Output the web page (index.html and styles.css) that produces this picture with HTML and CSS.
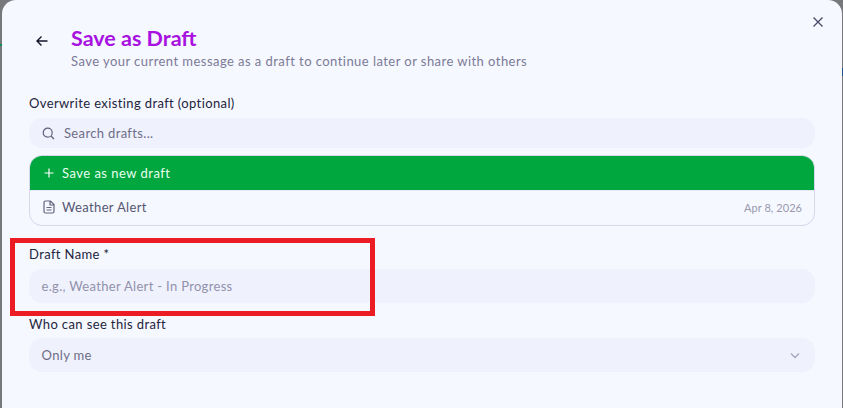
FILE: index.html
```html
<!DOCTYPE html>
<html lang="en">
<head>
<meta charset="utf-8">
<title>Save as Draft</title>
<link rel="stylesheet" href="styles.css">
</head>
<body>
<div class="modal">
  <button class="close" aria-label="Close">
    <svg width="12" height="12" viewBox="0 0 12 12"><path d="M1.500 1.500l9 9M10.500 1.500l-9 9"/></svg>
  </button>
  <header class="head">
    <svg class="back" width="14" height="14" viewBox="0 0 14 14"><path d="M12.500 7H2M6.500 2.500L2 7l4.500 4.500"/></svg>
    <div class="titles">
      <h1>Save as Draft</h1>
      <p>Save your current message as a draft to continue later or share with others</p>
    </div>
  </header>
  <label class="label first">Overwrite existing draft (optional)</label>
  <div class="field search">
    <svg width="13" height="13" viewBox="0 0 13 13"><circle cx="5.700" cy="5.700" r="4.500"/><path d="M9 9l3 3"/></svg>
    <span>Search drafts...</span>
  </div>
  <div class="list">
    <div class="row new">
      <svg width="12" height="12" viewBox="0 0 12 12"><path d="M6 1.500v9M1.500 6h9"/></svg>
      <span>Save as new draft</span>
    </div>
    <div class="row item">
      <svg width="12" height="14" viewBox="0 0 12 14"><path d="M3 1h4.500L11 4.500V11.500a1.500 1.500 0 0 1-1.500 1.500h-7A1.500 1.500 0 0 1 1 11.500v-9A1.500 1.500 0 0 1 2.500 1zM7 1v4h4M3.500 7.500h5M3.500 10h5"/></svg>
      <span class="name">Weather Alert</span>
      <span class="date">Apr 8, 2026</span>
    </div>
  </div>
  <label class="label second">Draft Name *</label>
  <div class="field input placeholder">e.g., Weather Alert - In Progress</div>
  <label class="label third">Who can see this draft</label>
  <div class="field input select">
    <span>Only me</span>
    <svg width="10" height="7" viewBox="0 0 10 7"><path d="M1 1.500L5 5.500l4-4"/></svg>
  </div>
  <div class="annotation"></div>
</div>
</body>
</html>
```
FILE: styles.css
```css
* { box-sizing: border-box; }
html, body { margin: 0; padding: 0; height: 100%; }
body {
  background:
    linear-gradient(#0f8f55, #0f8f55) 0 44px / 2px 2px no-repeat,
    linear-gradient(#1d4f9c, #1d4f9c) 842px 68px / 1px 8px no-repeat,
    #77787c;
  overflow: hidden;
  font-family: "Lato", "Noto Sans", sans-serif;
  padding-left: 2px;
}
.modal {
  position: relative;
  width: 840px;
  height: 408px;
  background: #f5f8ff;
  border-radius: 14px 14px 0 0;
  padding: 26px 27px 0 27px;
}
.close {
  position: absolute;
  top: 16px;
  right: 18px;
  width: 12px;
  height: 12px;
  padding: 0;
  border: 0;
  background: none;
  display: flex;
}
.close path { stroke: #4a4a68; stroke-width: 1.300; fill: none; }
.head { display: flex; align-items: flex-start; height: 43px; }
.back { margin: 8px 0 0 6px; flex: none; }
.back path { stroke: #14142b; stroke-width: 1.400; fill: none; }
.titles { margin-left: 22px; }
h1 {
  margin: 0;
  font-size: 21.500px;
  line-height: 24px;
  font-weight: 700;
  color: #a812e0;
}
.titles p {
  margin: 3px 0 0;
  font-size: 13px;
  line-height: 16px;
  color: #7c7a96;
  letter-spacing: .45px;
}
.label {
  display: block;
  font-size: 13px;
  line-height: 16px;
  color: #24243c;
  font-weight: 400;
  letter-spacing: .38px;
}
.first { margin-top: 26px; margin-bottom: 7px; }
.second { margin-top: 20px; margin-bottom: 7px; }
.third { margin-top: 13px; margin-bottom: 6px; }
.field {
  background: #eff1fd;
  border-radius: 13px;
  font-size: 13px;
  color: #6e6d88;
  display: flex;
  align-items: center;
  letter-spacing: .35px;
}
.search { height: 30px; padding-left: 13px; gap: 9px; width: 786px; }
.search svg { fill: none; stroke: #5f5f7a; stroke-width: 1.200; flex: none; }
.list {
  margin-top: 7px;
  width: 786px;
  height: 71px;
  border: 1px solid #d5d7ea;
  border-radius: 13px;
  overflow: hidden;
}
.row { display: flex; align-items: center; font-size: 13px; letter-spacing: .35px; }
.new {
  height: 34px;
  background: #00a63e;
  color: #e9fff0;
  padding-left: 13px;
  gap: 7px;
  letter-spacing: .48px;
}
.new svg { fill: none; stroke: #fff; stroke-width: 1.200; }
.item { height: 35px; padding: 0 12px 2px 13px; color: #565672; gap: 7px; border-top: 1px solid #e6e8f5; }
.item svg { fill: none; stroke: #64647e; stroke-width: 1.200; flex: none; }
.name { flex: 1; }
.date { font-size: 11px; color: #9a99ae; letter-spacing: .05px; }
.input { height: 34px; padding: 0 13px 0 12.500px; width: 786px; }
.placeholder { color: #9291ab; letter-spacing: .32px; }
.select { justify-content: space-between; }
.select svg { fill: none; stroke: #a5a4bb; stroke-width: 1.300; margin-right: 2px; }
.annotation {
  position: absolute;
  left: 7.500px;
  top: 238px;
  width: 365px;
  height: 78px;
  border: 5px solid #ec1c24;
  pointer-events: none;
}
```
